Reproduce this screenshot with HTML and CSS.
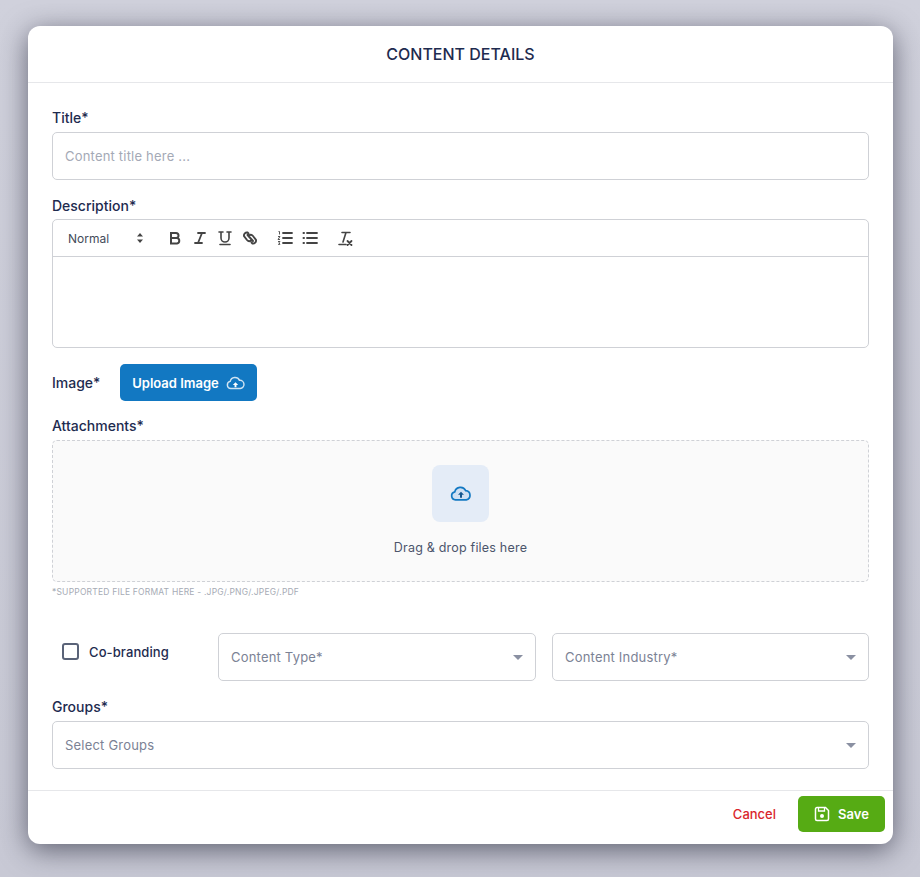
FILE: index.html
```html
<!DOCTYPE html>
<html lang="en">
<head>
<meta charset="utf-8">
<title>Content Details</title>
<link rel="stylesheet" href="styles.css">
</head>
<body>
<div class="overlay">
  <div class="modal">
    <header class="modal-header">CONTENT DETAILS</header>
    <div class="modal-body">
      <label class="label label-title">Title*</label>
      <div class="field placeholder">Content title here ...</div>

      <label class="label label-desc">Description*</label>
      <div class="editor">
        <div class="toolbar">
          <span class="tb-select">Normal
            <svg class="tb-updown" viewBox="0 0 8 12" width="8" height="12"><path d="M4 1l3 3.6H1zM4 11L1 7.4h6z" fill="#444"/></svg>
          </span>
          <span class="tb-group">
            <svg class="tb-icon" viewBox="0 0 18 18"><path d="M5 4h5a2.5 2.5 0 0 1 0 5H5zM5 9h6a2.8 2.8 0 0 1 0 5.5H5z" fill="none" stroke="#444" stroke-width="2"/></svg>
            <svg class="tb-icon" viewBox="0 0 18 18"><path d="M7 4h7M4 14h7M11 4L7 14" fill="none" stroke="#444" stroke-width="1.8" stroke-linecap="round"/></svg>
            <svg class="tb-icon" viewBox="0 0 18 18"><path d="M5 3v6a4 4 0 0 0 8 0V3M3 3h4M11 3h4" fill="none" stroke="#444" stroke-width="1.6" stroke-linecap="round"/><path d="M4 15.500h10" stroke="#444" stroke-width="1.6" stroke-linecap="round"/></svg>
            <svg class="tb-icon" viewBox="0 0 18 18"><path d="M7.500 4.500l-1-1a3 3 0 0 0-3.500 3.500l3 4a3 3 0 0 0 4 .5M10.500 13.500l1 1a3 3 0 0 0 3.500-3.500l-3-4a3 3 0 0 0-4-.5M6.500 6l5.500 6" fill="none" stroke="#444" stroke-width="1.900" stroke-linecap="round"/></svg>
          </span>
          <span class="tb-group">
            <svg class="tb-icon" viewBox="0 0 18 18"><path d="M7 4h9M7 9h9M7 14h9" stroke="#444" stroke-width="1.800" stroke-linecap="round"/><path d="M2.500 2.500h1v3M2 7.500h2l-2 3h2M2 12.500h2l-1 1.300 1 1.500h-2" fill="none" stroke="#444" stroke-width=".9"/></svg>
            <svg class="tb-icon" viewBox="0 0 18 18"><path d="M6 4h10M6 9h10M6 14h10" stroke="#444" stroke-width="1.800" stroke-linecap="round"/><path d="M2.500 4h.5M2.500 9h.5M2.500 14h.5" stroke="#444" stroke-width="2" stroke-linecap="round"/></svg>
          </span>
          <span class="tb-group">
            <svg class="tb-icon" viewBox="0 0 18 18"><path d="M6 3.500h8M10 3.500L7 13M3 15.500h7" fill="none" stroke="#444" stroke-width="1.600" stroke-linecap="round"/><path d="M11.500 12l4 4M15.500 12l-4 4" stroke="#444" stroke-width="1.800" stroke-linecap="round"/></svg>
          </span>
        </div>
        <div class="editor-area"></div>
      </div>

      <div class="image-row">
        <label class="label label-inline">Image*</label>
        <button class="upload-btn" type="button">Upload Image
          <svg viewBox="0 0 20 14" width="19" height="14"><path d="M5 12.800a3.800 3.800 0 0 1-.6-7.500A5.200 5.200 0 0 1 14.200 4.200 4.300 4.300 0 0 1 15 12.800z" fill="none" stroke="#fff" stroke-opacity=".8" stroke-width="1.500"/><path d="M10 6.200l2.800 2.800h-1.800v2.600h-2V9H7.200z" fill="#fff"/></svg>
        </button>
      </div>

      <label class="label label-attach">Attachments*</label>
      <div class="dropzone">
        <div class="drop-icon">
          <svg viewBox="0 0 22 15" width="22" height="15"><path d="M5.500 13.800a4 4 0 0 1-.7-7.900A5.800 5.800 0 0 1 15.700 4.700a4.600 4.600 0 0 1 .6 9.100z" fill="#cfe0f3" stroke="#1278c2" stroke-width="1.700"/><path d="M11 5.800l3 3h-2v3h-2v-3H8z" fill="#14568f"/></svg>
        </div>
        <div class="drop-text">Drag &amp; drop files here</div>
      </div>
      <div class="hint">*SUPPORTED FILE FORMAT HERE - .JPG/.PNG/.JPEG/.PDF</div>

      <div class="options-row">
        <label class="cobrand"><span class="checkbox"></span><span class="cobrand-text">Co-branding</span></label>
        <div class="field select"><span class="placeholder-dark">Content Type*</span><span class="caret"></span></div>
        <div class="field select"><span class="placeholder-dark">Content Industry*</span><span class="caret"></span></div>
      </div>

      <label class="label label-groups">Groups*</label>
      <div class="field select"><span class="placeholder-dark">Select Groups</span><span class="caret"></span></div>
    </div>
    <footer class="modal-footer">
      <button class="cancel-btn" type="button">Cancel</button>
      <button class="save-btn" type="button">
        <svg viewBox="0 0 16 16" width="16" height="16"><path d="M3 1.500h8.500l3 3V13a1.500 1.500 0 0 1-1.500 1.500H3A1.500 1.500 0 0 1 1.500 13V3A1.500 1.500 0 0 1 3 1.500z" fill="none" stroke="#fff" stroke-width="1.500"/><path d="M4.500 2v3h6V2" fill="none" stroke="#fff" stroke-width="1.300"/><circle cx="8" cy="10" r="2" fill="#fff"/></svg>
        Save
      </button>
    </footer>
  </div>
</div>
</body>
</html>
```
FILE: styles.css
```css
* { box-sizing: border-box; }
html, body { margin: 0; height: 100%; }
body {
  font-family: Inter, "Liberation Sans", sans-serif;
  color: #1e2b4f;
  background: #c9cad6;
  overflow: hidden;
}
.overlay {
  width: 920px;
  height: 877px;
  padding: 26px 27px 33px 28px;
  background: linear-gradient(180deg, #d0d1dc 0, #c8c9d5 100%);
}
.modal {
  width: 865px;
  height: 818px;
  background: #fff;
  border-radius: 12px;
  box-shadow: 0 6px 28px rgba(30, 32, 50, .62);
  display: flex;
  flex-direction: column;
}
.modal-header {
  height: 57px;
  flex: none;
  border-bottom: 1px solid #e6e7ea;
  display: flex;
  align-items: center;
  justify-content: center;
  font-size: 16px;
  font-weight: 500;
  color: #1e2b4f;
}
.modal-body {
  flex: 1;
  padding: 0 24px;
  display: flex;
  flex-direction: column;
}
.label {
  display: block;
  font-size: 14px;
  font-weight: 500;
  line-height: 17px;
  color: #1e2b4f;
}
.label-title { margin-top: 26px; margin-bottom: 6px; }
.label-desc { margin-top: 17px; margin-bottom: 5px; }
.label-attach { margin-top: 16px; margin-bottom: 6px; }
.label-groups { margin-top: 17px; margin-bottom: 6px; }
.label-inline { width: 68px; }
.field {
  height: 48px;
  border: 1px solid #cfd1d6;
  border-radius: 5px;
  padding: 0 12px;
  display: flex;
  align-items: center;
  font-size: 13px;
  letter-spacing: .2px;
  background: #fff;
}
.placeholder { color: #a4a9b6; }
.placeholder-dark { color: #7b8295; }
.select { justify-content: space-between; padding-right: 12px; }
.caret {
  width: 0;
  height: 0;
  border-left: 5px solid transparent;
  border-right: 5px solid transparent;
  border-top: 5px solid #8a90a2;
}
.editor {
  height: 129px;
  border: 1px solid #cfd1d6;
  border-radius: 5px;
  display: flex;
  flex-direction: column;
}
.toolbar {
  height: 37px;
  flex: none;
  border-bottom: 1px solid #cfd1d6;
  display: flex;
  align-items: center;
  padding-left: 15px;
}
.tb-select {
  width: 98px;
  display: flex;
  align-items: center;
  font-size: 12px;
  color: #444b5a;
  position: relative;
}
.tb-updown { margin-left: 27px; }
.tb-group { display: flex; gap: 7px; margin-right: 17px; }
.tb-icon { width: 18px; height: 18px; display: block; }
.editor-area { flex: 1; }
.image-row {
  height: 37px;
  margin-top: 16px;
  display: flex;
  align-items: center;
  flex: none;
}
.upload-btn {
  width: 137px;
  height: 37px;
  border: 0;
  border-radius: 5px;
  background: #1278c2;
  color: #fff;
  font-family: inherit;
  font-size: 13px;
  font-weight: 600;
  display: flex;
  align-items: center;
  justify-content: center;
  gap: 7px;
}
.dropzone {
  height: 142px;
  border: 1px dashed #cfd1d6;
  border-radius: 5px;
  background: #fafafa;
  display: flex;
  flex-direction: column;
  align-items: center;
  padding-top: 24px;
  flex: none;
}
.drop-icon {
  width: 57px;
  height: 57px;
  border-radius: 8px;
  background: #e4ecf7;
  display: flex;
  align-items: center;
  justify-content: center;
}
.drop-text {
  margin-top: 18px;
  font-size: 12.500px;
  letter-spacing: .2px;
  color: #4c556c;
}
.hint {
  margin-top: 5px;
  font-size: 8.500px;
  line-height: 11px;
  letter-spacing: .2px;
  color: #a6abb5;
}
.options-row {
  margin-top: 35px;
  display: flex;
  align-items: flex-start;
  gap: 16px;
}
.options-row .field { width: 318px; }
.options-row .field:last-child { width: 317px; }
.cobrand {
  width: 150px;
  display: flex;
  align-items: center;
  height: 37px;
  padding-left: 10px;
}
.checkbox {
  width: 17px;
  height: 17px;
  border: 2px solid #5a6378;
  border-radius: 3px;
  flex: none;
}
.cobrand-text {
  margin-left: 10px;
  font-size: 13px;
  font-weight: 500;
  letter-spacing: .1px;
  color: #1e2b4f;
}
.modal-footer {
  height: 54px;
  flex: none;
  border-top: 1px solid #e6e7ea;
  display: flex;
  align-items: center;
  justify-content: flex-end;
  gap: 22px;
  padding: 0 8px 8px 0;
}
.cancel-btn {
  border: 0;
  background: none;
  padding: 0;
  font-family: inherit;
  font-size: 13px;
  font-weight: 500;
  color: #d9262c;
}
.save-btn {
  width: 87px;
  height: 36px;
  border: 0;
  border-radius: 5px;
  background: #56ab14;
  color: #fff;
  font-family: inherit;
  font-size: 13px;
  font-weight: 600;
  display: flex;
  align-items: center;
  justify-content: center;
  gap: 8px;
}
```
